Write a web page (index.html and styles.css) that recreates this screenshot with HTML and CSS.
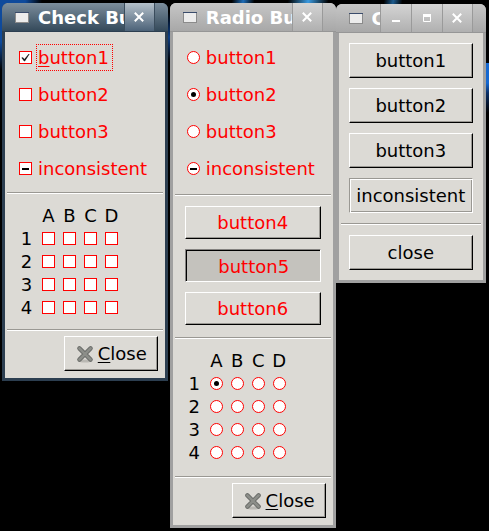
FILE: index.html
```html
<!DOCTYPE html>
<html lang="en">
<head>
    <meta charset="UTF-8">
    <meta name="viewport" content="width=device-width, initial-scale=1.0">
    <title>Buttons</title>
    <link rel="stylesheet" href="styles.css">
</head>
<body>
    <svg width="0" height="0" class="defs">
        <symbol id="win-icon" viewBox="0 0 14 12">
            <rect x="0.5" y="1.5" width="13" height="10" fill="#ececec" stroke="#8b8b8b"/>
            <path d="M0 1.5h14" stroke="#3a4c6c"/>
        </symbol>
        <symbol id="win-close" viewBox="0 0 10 10">
            <path d="M0.8 0.8l8.4 8.4M9.2 0.8l-8.4 8.4" stroke="#fff" stroke-width="2"/>
        </symbol>
        <symbol id="win-max" viewBox="0 0 10 10">
            <path d="M1.5 1v7.5h7V1" fill="none" stroke="#fff"/>
            <path d="M1 2.5h8" stroke="#fff" stroke-width="3"/>
        </symbol>
        <symbol id="win-min" viewBox="0 0 10 10">
            <path d="M1 8h8" stroke="#fff" stroke-width="2"/>
        </symbol>
        <symbol id="stock-close" viewBox="0 0 18 18">
            <ellipse cx="9" cy="16" rx="6" ry="1.6" fill="#b9b8b3"/>
            <path d="M3.4 3.4l11.2 11.2M14.6 3.4L3.4 14.6" stroke="#6a6c69" stroke-width="4.4" stroke-linecap="round"/>
            <path d="M3.4 3.4l11.2 11.2M14.6 3.4L3.4 14.6" stroke="#8c8e89" stroke-width="2.6" stroke-linecap="round"/>
        </symbol>
    </svg>
    <div class="desktop">
        <section class="window active">
            <div class="titlebar">
                <svg class="win-icon"><use href="#win-icon"/></svg>
                <span class="title">Check Buttons</span>
                <button class="win-button" aria-label="Close window"><svg><use href="#win-close"/></svg></button>
            </div>
            <div class="options">
                <label class="option"><input type="checkbox" checked><span class="focus"><u>b</u>utton1</span></label>
                <label class="option"><input type="checkbox"><span>button2</span></label>
                <label class="option"><input type="checkbox"><span>button3</span></label>
                <label class="option"><input type="checkbox" class="mixed"><span>inconsistent</span></label>
            </div>
            <hr>
            <table>
                <tr><td></td><th>A</th><th>B</th><th>C</th><th>D</th></tr>
                <tr>
                    <th>1</th>
                    <td><input type="checkbox" aria-label="A1"></td>
                    <td><input type="checkbox" aria-label="B1"></td>
                    <td><input type="checkbox" aria-label="C1"></td>
                    <td><input type="checkbox" aria-label="D1"></td>
                </tr>
                <tr>
                    <th>2</th>
                    <td><input type="checkbox" aria-label="A2"></td>
                    <td><input type="checkbox" aria-label="B2"></td>
                    <td><input type="checkbox" aria-label="C2"></td>
                    <td><input type="checkbox" aria-label="D2"></td>
                </tr>
                <tr>
                    <th>3</th>
                    <td><input type="checkbox" aria-label="A3"></td>
                    <td><input type="checkbox" aria-label="B3"></td>
                    <td><input type="checkbox" aria-label="C3"></td>
                    <td><input type="checkbox" aria-label="D3"></td>
                </tr>
                <tr>
                    <th>4</th>
                    <td><input type="checkbox" aria-label="A4"></td>
                    <td><input type="checkbox" aria-label="B4"></td>
                    <td><input type="checkbox" aria-label="C4"></td>
                    <td><input type="checkbox" aria-label="D4"></td>
                </tr>
            </table>
            <hr>
            <div class="actions">
                <button class="button"><svg><use href="#stock-close"/></svg><span><u>C</u>lose</span></button>
            </div>
        </section>

        <section class="window roomy">
            <div class="titlebar">
                <svg class="win-icon"><use href="#win-icon"/></svg>
                <span class="title">Radio Buttons</span>
                <button class="win-button" aria-label="Close window"><svg><use href="#win-close"/></svg></button>
            </div>
            <div class="options">
                <label class="option"><input type="radio" name="choice"><span>button1</span></label>
                <label class="option"><input type="radio" name="choice" checked><span>button2</span></label>
                <label class="option"><input type="radio" name="choice"><span>button3</span></label>
                <label class="option"><input type="radio" name="choice" class="mixed"><span>inconsistent</span></label>
            </div>
            <hr>
            <div class="toggles">
                <button class="button" aria-pressed="false">button4</button>
                <button class="button" aria-pressed="true">button5</button>
                <button class="button" aria-pressed="false">button6</button>
            </div>
            <hr>
            <table>
                <tr><td></td><th>A</th><th>B</th><th>C</th><th>D</th></tr>
                <tr>
                    <th>1</th>
                    <td><input type="radio" name="cell" aria-label="A1" checked></td>
                    <td><input type="radio" name="cell" aria-label="B1"></td>
                    <td><input type="radio" name="cell" aria-label="C1"></td>
                    <td><input type="radio" name="cell" aria-label="D1"></td>
                </tr>
                <tr>
                    <th>2</th>
                    <td><input type="radio" name="cell" aria-label="A2"></td>
                    <td><input type="radio" name="cell" aria-label="B2"></td>
                    <td><input type="radio" name="cell" aria-label="C2"></td>
                    <td><input type="radio" name="cell" aria-label="D2"></td>
                </tr>
                <tr>
                    <th>3</th>
                    <td><input type="radio" name="cell" aria-label="A3"></td>
                    <td><input type="radio" name="cell" aria-label="B3"></td>
                    <td><input type="radio" name="cell" aria-label="C3"></td>
                    <td><input type="radio" name="cell" aria-label="D3"></td>
                </tr>
                <tr>
                    <th>4</th>
                    <td><input type="radio" name="cell" aria-label="A4"></td>
                    <td><input type="radio" name="cell" aria-label="B4"></td>
                    <td><input type="radio" name="cell" aria-label="C4"></td>
                    <td><input type="radio" name="cell" aria-label="D4"></td>
                </tr>
            </table>
            <hr>
            <div class="actions">
                <button class="button"><svg><use href="#stock-close"/></svg><span><u>C</u>lose</span></button>
            </div>
        </section>

        <section class="window narrow">
            <div class="titlebar">
                <svg class="win-icon"><use href="#win-icon"/></svg>
                <span class="title">C</span>
                <button class="win-button" aria-label="Minimize window"><svg><use href="#win-min"/></svg></button>
                <button class="win-button" aria-label="Maximize window"><svg><use href="#win-max"/></svg></button>
                <button class="win-button" aria-label="Close window"><svg><use href="#win-close"/></svg></button>
            </div>
            <div class="stack">
                <button class="button">button1</button>
                <button class="button">button2</button>
                <button class="button">button3</button>
                <button class="button flat">inconsistent</button>
            </div>
            <hr>
            <div class="stack">
                <button class="button">close</button>
            </div>
        </section>
    </div>
</body>
</html>
```
FILE: styles.css
```css
* {
    box-sizing: border-box;
}
body {
    margin: 0;
    min-height: 100vh;
    background-color: #000;
    /* blue streaks showing between the windows */
    background-image:
        radial-gradient(ellipse 42px 70px at 0 0, #0e4a9c 60%, transparent),
        linear-gradient(100deg, transparent, #1c6cb8, transparent),
        linear-gradient(100deg, transparent, #3a9ae0, transparent),
        linear-gradient(100deg, transparent, #1c5c90, transparent),
        linear-gradient(transparent, #0e3f86, transparent),
        linear-gradient(#1668d0, #1668d0 40%, #0a2f66 60%, transparent);
    background-size: 60px 80px, 22px 4px, 40px 4px, 18px 4px, 2px 50px, 3px 50px;
    background-position: 0 0, 232px 0, 288px 0, 384px 0, 168px 12px, right 63px;
    background-repeat: no-repeat;
    font-family: "DejaVu Sans", sans-serif;
    font-size: 18px;
    line-height: 23px;
    color: #000;
}
.defs {
    position: absolute;
}
.desktop {
    display: flex;
    align-items: flex-start;
    padding: 3px 3px 3px 2px;
}
.window {
    flex: 166 1 0;
    min-width: 0;
    border: 3px solid #a0a0a0;
    border-top: none;
    border-radius: 6px 6px 0 0;
    background-color: #dcdad5;
}
.window.active {
    border-color: #2c3e50;
    margin-right: 2px;
}
.window.narrow {
    flex-grow: 150;
    margin-top: 1px;
}
.titlebar {
    display: flex;
    align-items: center;
    height: 29px;
    margin: 0 -3px;
    padding: 0 13px;
    border-bottom: 1px solid #969696;
    border-radius: 6px 6px 0 0;
    background: linear-gradient(#c6c6c6, #a8a8a8);
}
.active .titlebar {
    border-color: #2c3e50;
    background: linear-gradient(#7b8d9c, #34495a);
}
.win-icon {
    flex: none;
    width: 14px;
    height: 12px;
    margin-right: 9px;
}
.title {
    flex: 1;
    min-width: 0;
    overflow: hidden;
    white-space: nowrap;
    font-weight: bold;
    color: #fff;
}
.win-button {
    display: flex;
    flex: none;
    align-items: center;
    justify-content: center;
    width: 31px;
    height: 28px;
    padding: 0;
    border: solid #9a9a9a;
    border-width: 0 0 0 1px;
    background: linear-gradient(#d4d4d4, #b0b0b0);
}
.win-button:last-child {
    border-right-width: 1px;
}
.active .win-button {
    border-color: #3a4c5c;
    background: linear-gradient(#b4c0ca, #4c6278);
}
.win-button svg {
    width: 10px;
    height: 10px;
}
hr {
    height: 2px;
    margin: 0 2px;
    border: solid;
    border-width: 1px 0;
    border-color: #9a9893 transparent #fff;
}
.options {
    display: flex;
    flex-direction: column;
    gap: 10px;
    padding: 12px 0 10px 14px;
}
.option {
    display: flex;
    align-items: center;
    gap: 4px;
    color: #f00;
}
.option span {
    padding: 1px 3px 1px 1px;
    border: 1px solid transparent;
}
.option .focus {
    border: 1px dotted #f00;
}
u {
    text-underline-offset: 2px;
}
input {
    display: grid;
    flex: none;
    place-items: center;
    appearance: none;
    width: 13px;
    height: 13px;
    margin: 0;
    border: 1px solid #f00;
    background-color: #fff;
}
input[type="radio"] {
    border-radius: 50%;
}
input[type="checkbox"]:checked::before {
    content: "";
    width: 9px;
    height: 9px;
    background-color: #222;
    clip-path: polygon(4% 54%, 20% 46%, 38% 68%, 84% 10%, 96% 10%, 44% 92%, 34% 92%);
}
input[type="radio"]:checked::before {
    content: "";
    width: 5px;
    height: 5px;
    border-radius: 50%;
    background-color: #000;
}
.mixed::before {
    content: "";
    width: 7px;
    height: 2px;
    background-color: #000;
}
table {
    margin: 10px;
    border-collapse: collapse;
}
th, td {
    width: 21px;
    height: 23px;
    padding: 0;
    font-weight: normal;
    text-align: center;
}
td input {
    margin: 0 auto;
}
tr > :first-child {
    width: 23px;
}
.button {
    display: flex;
    align-items: center;
    justify-content: center;
    height: 35px;
    padding: 0;
    border: solid;
    border-width: 1px;
    border-color: #fff #000 #000 #fff;
    background-color: #dcdad5;
    box-shadow: inset -1px -1px #9a9893;
    font: inherit;
    color: inherit;
}
.button.flat {
    border-color: #9a9893 #fff #fff #9a9893;
    box-shadow: inset 1px 1px #fff, inset -1px -1px #9a9893;
}
.actions {
    display: flex;
    justify-content: flex-end;
    padding: 5px 7px 7px;
}
.actions .button {
    gap: 4px;
    padding: 0 10px 0 11px;
}
.actions svg {
    width: 18px;
    height: 18px;
}
.toggles {
    display: flex;
    flex-direction: column;
    gap: 10px;
    padding: 10px 12px 12px;
}
.toggles .button {
    height: 33px;
    color: #f00;
}
.toggles .button[aria-pressed="true"] {
    padding: 2px 0 0 2px;
    border-color: #848280 #fff #fff #848280;
    background-color: #c4c2bd;
    box-shadow: inset 1px 1px #000;
}
.roomy .options {
    padding-bottom: 12px;
}
.roomy table {
    margin-bottom: 12px;
}
.stack {
    display: flex;
    flex-direction: column;
    gap: 10px;
    padding: 10px;
}
```
